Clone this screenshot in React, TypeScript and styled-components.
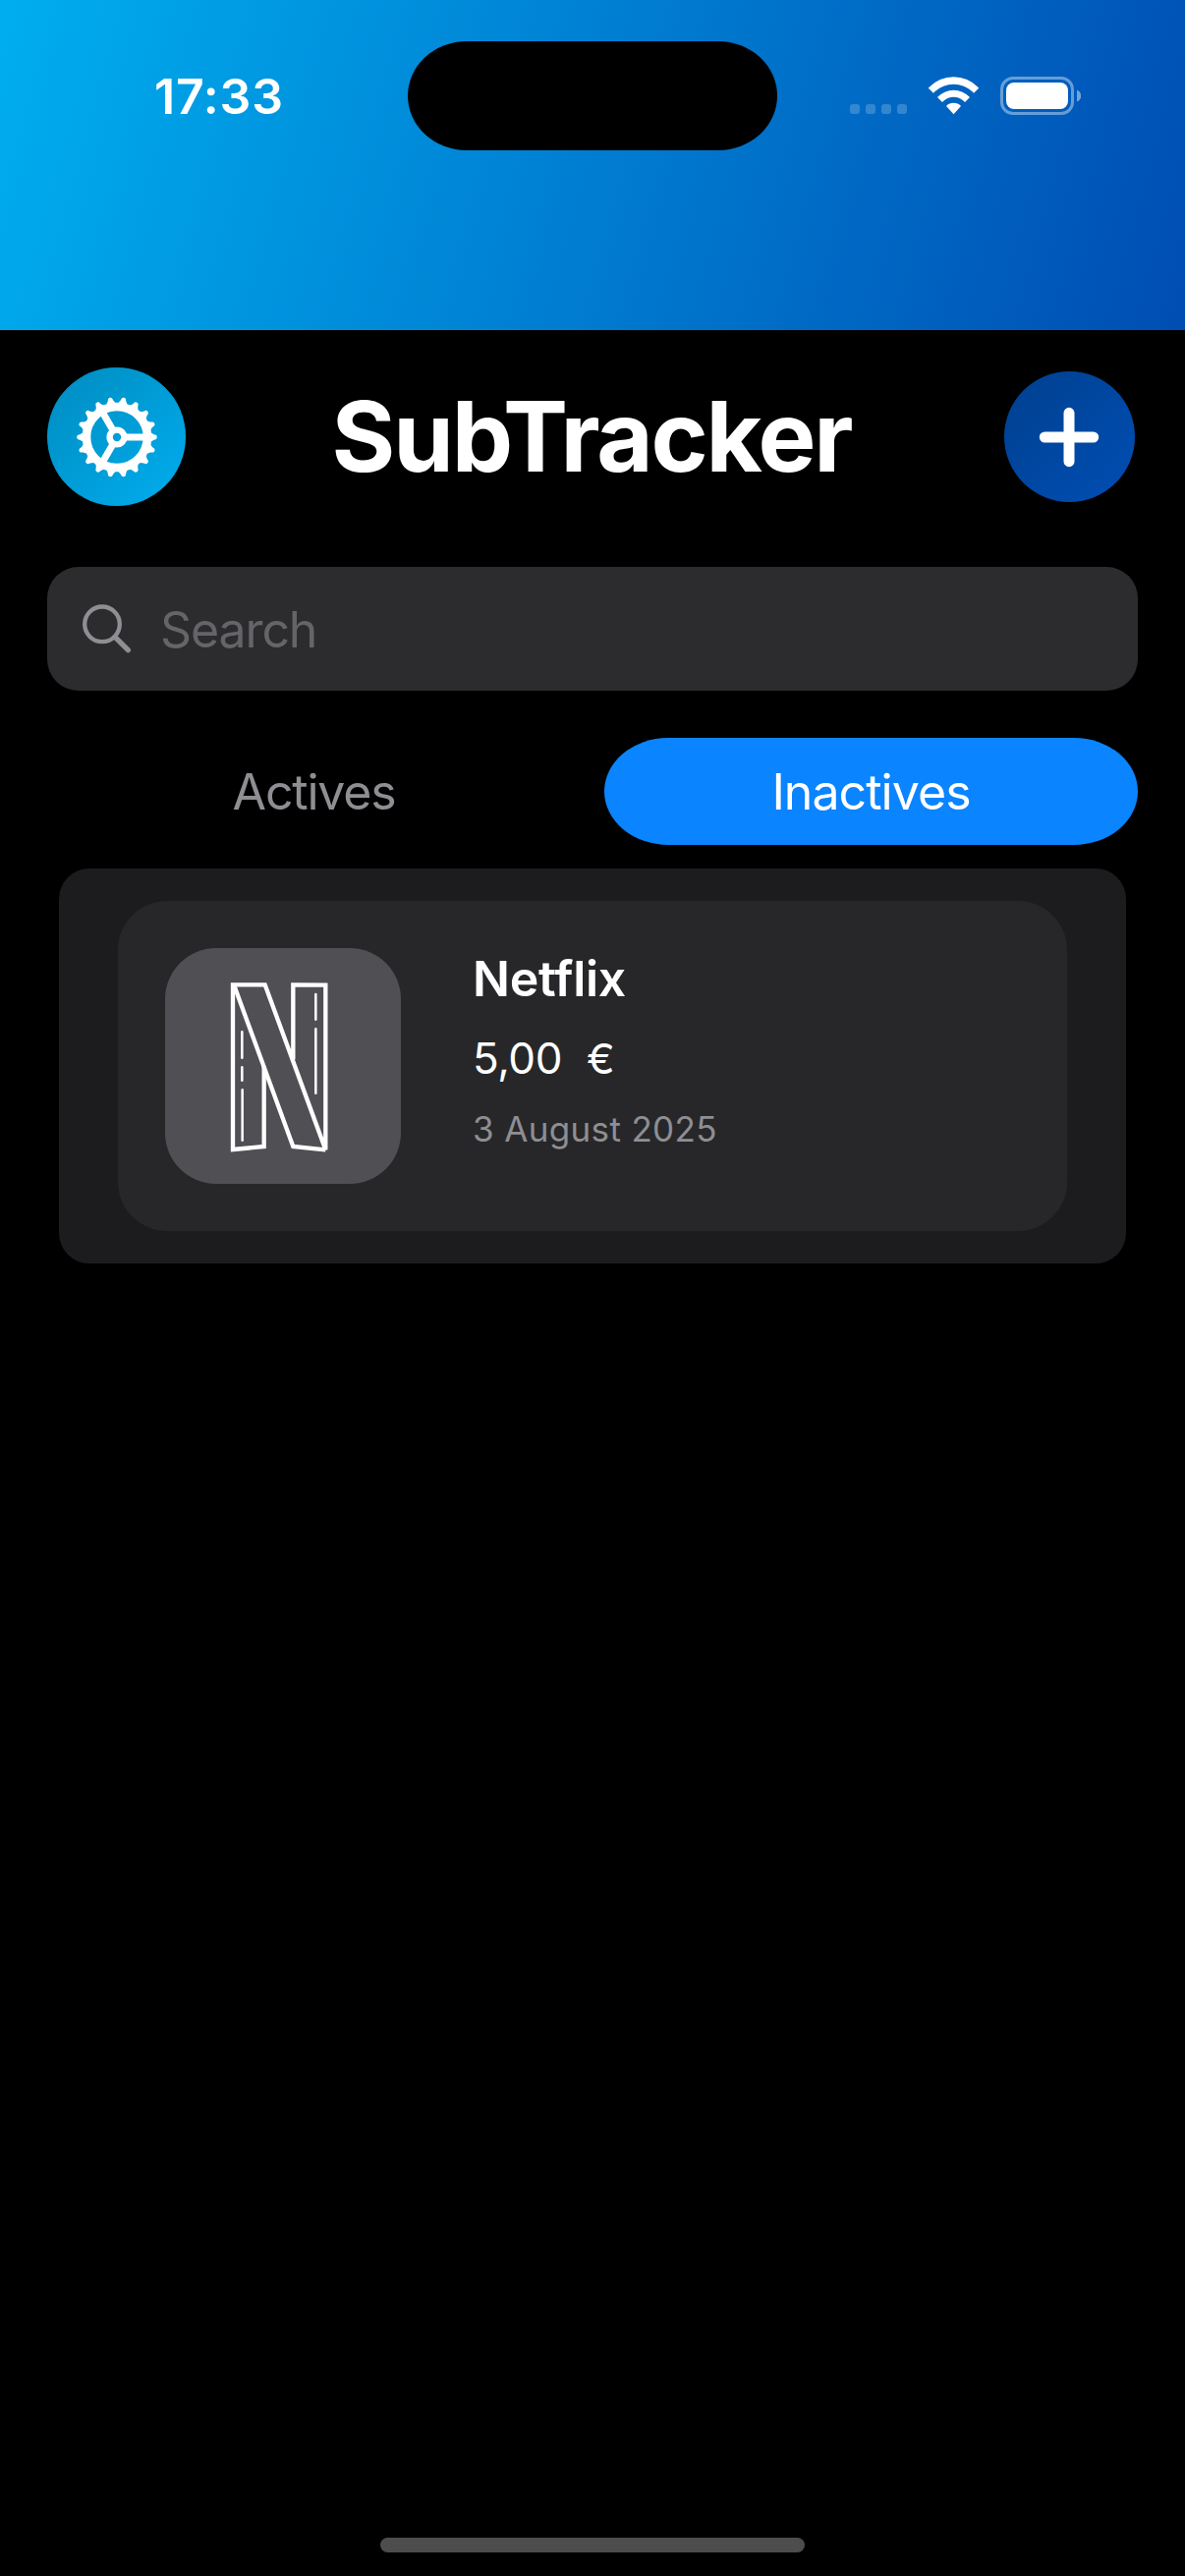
import React, { useState } from "react";
import styled, { createGlobalStyle } from "styled-components";

const GlobalStyle = createGlobalStyle`
  *, *::before, *::after { box-sizing: border-box; }
  body {
    margin: 0;
    background: #000;
    font-family: Inter, "Liberation Sans", sans-serif;
    -webkit-font-smoothing: antialiased;
  }
  button, input { font: inherit; border: 0; padding: 0; margin: 0; background: none; }
`;

const Screen = styled.div`
  width: 1206px;
  height: 2622px;
  display: flex;
  flex-direction: column;
  background: #000;
  color: #fff;
  overflow: hidden;
`;

const Banner = styled.header`
  flex: none;
  height: 336px;
  background: linear-gradient(105.57deg, #00aeef, #004db3);
`;

const StatusBar = styled.div`
  height: 194px;
  display: grid;
  grid-template-columns: 415px 376px 1fr;
  align-items: center;
`;

const Clock = styled.time`
  padding-left: 157px;
  font-size: 50px;
  font-weight: 600;
  line-height: 60px;
  letter-spacing: 0.8px;
  margin-top: 2px;
`;

const Island = styled.div`
  height: 111px;
  background: #000;
  border-radius: 60px / 55.5px;
`;

const Indicators = styled.div`
  display: flex;
  align-items: flex-end;
  padding: 1px 0 0 74px;
`;

const SignalDots = styled.div`
  display: flex;
  gap: 6px;
  margin-bottom: 1px;
  span {
    width: 10px;
    height: 10px;
    border-radius: 3px;
    background: rgba(255, 255, 255, 0.2);
  }
`;

const WifiIcon = styled.svg`
  width: 51px;
  height: 39px;
  margin-left: 22px;
`;

const BatteryIcon = styled.svg`
  width: 82px;
  height: 39px;
  margin-left: 22px;
`;

const TitleRow = styled.div`
  flex: none;
  display: flex;
  align-items: center;
  justify-content: space-between;
  height: 141px;
  margin: 38px 51px 0 48px;
`;

const Title = styled.h1`
  margin: 0 7px 1px 0;
  font-size: 99px;
  line-height: 120px;
  font-weight: 700;
  letter-spacing: -2.2px;
`;

const RoundButton = styled.button<{ $size: number; $from: string; $to: string }>`
  width: ${(p) => p.$size}px;
  height: ${(p) => p.$size}px;
  border-radius: 50%;
  display: grid;
  place-items: center;
  color: #fff;
  background: linear-gradient(135deg, ${(p) => p.$from}, ${(p) => p.$to});
`;

const SearchField = styled.label`
  flex: none;
  display: flex;
  align-items: center;
  gap: 29px;
  height: 126px;
  margin: 62px 48px 0;
  padding-left: 36px;
  border-radius: 32px;
  background: #2c2c2e;
`;

const SearchInput = styled.input`
  flex: 1;
  height: 62px;
  font-size: 50px;
  line-height: 62px;
  letter-spacing: -1.1px;
  color: #fff;
  outline: none;
  margin-top: 2px;
  &::placeholder { color: #656468; opacity: 1; }
`;

const Tabs = styled.div`
  flex: none;
  display: grid;
  grid-template-columns: 543px 543px;
  gap: 24px;
  height: 109px;
  margin: 48px 48px 0;
`;

const Tab = styled.button<{ $active: boolean }>`
  border-radius: 65px / 54.5px;
  background: ${(p) => (p.$active ? "#0a84ff" : "transparent")};
  color: ${(p) => (p.$active ? "#fff" : "#8e8e93")};
  font-size: 50px;
  line-height: 62px;
  letter-spacing: ${(p) => (p.$active ? "-0.95px" : "-1.2px")};
`;

const List = styled.section`
  flex: none;
  margin: 24px 60px 0;
  padding: 33px 60px;
  border-radius: 31px;
  background: #1c1c1e;
`;

const Card = styled.article`
  display: flex;
  gap: 73px;
  height: 336px;
  padding: 48px;
  border-radius: 50px;
  background: #272729;
`;

const Logo = styled.div`
  flex: none;
  width: 240px;
  height: 240px;
  border-radius: 52px;
  background: #504f54;
  svg { display: block; margin: 5px 0 0 42px; }
`;

const Details = styled.div`
  display: flex;
  flex-direction: column;
  white-space: pre;
`;

const Name = styled.h2`
  margin: 0;
  font-size: 50px;
  line-height: 62px;
  font-weight: 600;
  letter-spacing: -0.25px;
`;

const Price = styled.div`
  height: 56px;
  margin-top: 22px;
  font-size: 44px;
  line-height: 56px;
  letter-spacing: -0.4px;
`;

const Currency = styled.span`
  margin-left: 1px;
  font-size: 43px;
  line-height: 1;
`;

const DueDate = styled.time`
  margin-top: 21px;
  font-size: 35px;
  line-height: 46px;
  letter-spacing: 0.35px;
  color: #8e8e93;
`;

const HomeIndicator = styled.div`
  flex: none;
  width: 432px;
  height: 15px;
  margin: auto auto 24px;
  border-radius: 8px;
  background: #4d4d4d;
`;

const toothAngles = Array.from({ length: 18 }, (_, i) => i * 20);

const GearIcon = () => (
  <svg width="84" height="84" viewBox="-42 -42 84 84" fill="none" stroke="currentColor">
    <circle r="31" strokeWidth="8.6" />
    {toothAngles.map((a) => (
      <path
        key={a}
        transform={`rotate(${a})`}
        d="M33 -5.2C36 -4.5 37 -2.5 39.5 -2.2C41.2 -1.6 41.2 1.6 39.5 2.2C37 2.5 36 4.5 33 5.2Z"
        fill="currentColor"
        stroke="none"
      />
    ))}
    {[0, 120, 240].map((a) => (
      <path key={a} transform={`rotate(${a})`} d="M8 0H30" strokeWidth="7" />
    ))}
    <circle r="7.4" strokeWidth="6.4" />
  </svg>
);

const PlusIcon = () => (
  <svg width="62" height="62" viewBox="-31 -31 62 62" stroke="currentColor" strokeWidth="11" strokeLinecap="round">
    <path d="M-24.7 0H24.7M0 -24.7V24.7" />
  </svg>
);

const SearchIcon = () => (
  <svg width="50" height="50" viewBox="0 0 150 150" fill="none" stroke="#8e8e93">
    <circle cx="60" cy="61" r="53.5" strokeWidth="13" />
    <path d="M99 100L139 140" strokeWidth="16" strokeLinecap="round" />
  </svg>
);

const NetflixLogo = () => (
  <svg width="150" height="220" viewBox="0 0 450 660" fill="none" stroke="#fff" strokeWidth="13">
    <path d="M176 345V591L81 600V97H179L364 601V98L265 97V325" />
    <path d="M84 97L265 591L364 601" />
    <g strokeWidth="7.5" strokeLinecap="round">
      <path d="M109 241V320M109 349V389M110 418V572" />
      <path d="M334 126V203M334 232V428" />
    </g>
  </svg>
);

const tabNames = ["Actives", "Inactives"];

export default function App() {
  const [tab, setTab] = useState("Inactives");
  return (
    <>
      <GlobalStyle />
      <Screen>
        <Banner>
          <StatusBar>
            <Clock>17:33</Clock>
            <Island />
            <Indicators>
              <SignalDots>
                <span />
                <span />
                <span />
                <span />
              </SignalDots>
              <WifiIcon viewBox="0 0 153 117" fill="#fff">
                <path d="M1 33Q-1 35 1 37L15 50L19 46A84.5 84.5 0 0 1 134 46L138 50L152 37Q154 35 152 33A104 104 0 0 0 1 33Z" />
                <path d="M27 63L42 78L46 74A46 46 0 0 1 107 74L111 78L126 63A68 68 0 0 0 27 63Z" />
                <path d="M54 90L76.5 115L99 90A31 31 0 0 0 54 90Z" />
              </WifiIcon>
              <BatteryIcon viewBox="0 0 82 39">
                <rect x="1.5" y="1.5" width="72" height="36" rx="11.5" fill="none" stroke="#fff" strokeOpacity="0.4" strokeWidth="3" />
                <rect x="6" y="6" width="63" height="27" rx="8" fill="#fff" />
                <path d="M78 13.5A6.4 6.4 0 0 1 78 25.5Z" fill="#fff" fillOpacity="0.45" />
              </BatteryIcon>
            </Indicators>
          </StatusBar>
        </Banner>
        <TitleRow>
          <RoundButton $size={141} $from="#008cc0" $to="#00adee" aria-label="Settings">
            <GearIcon />
          </RoundButton>
          <Title>SubTracker</Title>
          <RoundButton $size={133} $from="#00408f" $to="#004eb4" aria-label="Add">
            <PlusIcon />
          </RoundButton>
        </TitleRow>
        <SearchField>
          <SearchIcon />
          <SearchInput placeholder="Search" />
        </SearchField>
        <Tabs>
          {tabNames.map((name) => (
            <Tab key={name} $active={name === tab} onClick={() => setTab(name)}>
              {name}
            </Tab>
          ))}
        </Tabs>
        <List>
          <Card>
            <Logo>
              <NetflixLogo />
            </Logo>
            <Details>
              <Name>Netflix</Name>
              <Price>
                {"5,00  "}
                <Currency>€</Currency>
              </Price>
              <DueDate>3 August 2025</DueDate>
            </Details>
          </Card>
        </List>
        <HomeIndicator />
      </Screen>
    </>
  );
}
